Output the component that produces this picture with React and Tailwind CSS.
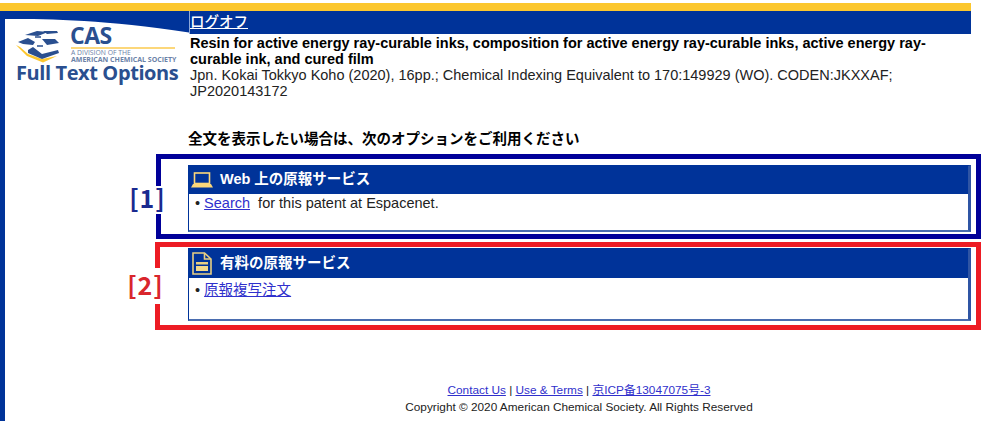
const BLUE = 'bg-[#003399]';

const Logo = () => (
  <>
    <svg className="absolute left-[10px] top-[18px]" width="46" height="34" viewBox="0 0 46 34">
      <path d="M1 16 L5 18 L13 25 L27 30 L42 27 L28 33.5 L12 27 Z" fill="#fcc72e" />
      <path d="M13 21 L18 18 L27 25 L43 21 L44 24 L27 30 L13 24 Z" fill="#2a4f8f" />
      <path d="M10 6 L22 2 L33 3 L23 7 Z" fill="#2a4f8f" />
      <path d="M28 2 L42 2 L43 4 L32 5 Z" fill="#2a4f8f" />
      <path d="M3 13 L13 9 L20 13 L18 16 L8 15 Z" fill="#2a4f8f" />
      <path d="M27 10 L40 10 L44 14 L32 16 Z" fill="#2a4f8f" />
      <path d="M20 8 L26 8 M22 17 L28 17" stroke="#2a4f8f" strokeWidth="1.5" />
    </svg>
    <div className="absolute left-[65px] top-[13px] text-[23px] leading-[23px] font-bold text-[#2a4f8f] font-['Open_Sans',sans-serif] tracking-[-0.5px]">CAS</div>
    <div className="absolute left-[66px] top-[36px] w-[104px] border-t-2 border-[#fcd77a]" />
    <div className="absolute left-[66px] top-[39px] text-[6.8px] leading-[6px] text-[#6b82a8] font-['Open_Sans',sans-serif] whitespace-nowrap">A DIVISION OF THE</div>
    <div className="absolute left-[66px] top-[46px] text-[7px] leading-[6px] font-bold text-[#6b82a8] font-['Open_Sans',sans-serif] whitespace-nowrap">AMERICAN CHEMICAL SOCIETY</div>
    <div className="absolute left-[11px] top-[53px] text-[20px] leading-[18px] font-bold text-[#2a4f8f] font-['Open_Sans',sans-serif] whitespace-nowrap tracking-[-0.4px]">Full Text Options</div>
  </>
);

const LaptopIcon = () => (
  <svg width="22" height="16" viewBox="0 0 22 16" fill="none">
    <rect x="3.5" y="1" width="15" height="10.5" stroke="#fcd77a" strokeWidth="1.6" />
    <path d="M2 12 H20 L22 15.5 H0 Z" fill="#fcd77a" />
  </svg>
);

const DocIcon = () => (
  <svg width="20" height="23" viewBox="0 0 20 23" fill="none">
    <path d="M1 1 H12.5 L19 7 V22 H1 Z" stroke="#e8cf82" strokeWidth="1.6" fill="#003399" />
    <path d="M12.5 1 V7 H19" stroke="#e8cf82" strokeWidth="1.6" />
    <rect x="4" y="10" width="12" height="2.5" fill="#e8cf82" />
    <rect x="4" y="14" width="12" height="5" fill="#f3d98a" />
  </svg>
);

const Card = ({ icon, title, headerHeight, children }) => (
  <div className="w-[783px] border border-[#003399] border-r-[3px] border-b-[2px] border-b-[#4a6db0] border-r-[#2f55a4]">
    <div className={`flex items-center gap-[7px] ${BLUE} ${headerHeight} text-white text-[14.5px] font-bold`}>
      <span className="ml-[2px] w-[22px] flex justify-center">{icon}</span>
      <span>{title}</span>
    </div>
    {children}
  </div>
);

const Frame = ({ className, labelClassName, label, children }) => (
  <div className={`relative border-[5px] ${className}`}>
    <div className={`absolute flex items-center justify-center bg-white w-[35px] text-[25px] leading-[25px] font-bold font-['Noto_Sans_CJK_JP',sans-serif] tracking-[1px] ${labelClassName}`}>{label}</div>
    {children}
  </div>
);

export default function App() {
  return (
    <div className="w-[992px] h-[421px] overflow-hidden bg-white pt-[3px] font-['Liberation_Sans','Noto_Sans_CJK_JP',sans-serif] text-[14.5px] text-[#222]">
      <div className="w-[971px] h-[8px] bg-[#fcc72e]" />
      <div className="flex h-[410px]">
        <div className={`w-[5px] ${BLUE}`} />
        <div className="w-[966px]">
          <div className="flex">
            <div className="relative w-[184px] h-[100px]">
              <svg className="absolute left-0 top-0" width="184" height="23" viewBox="0 0 184 23">
                <path d="M0 0 H184 V21.5 C100 9 50 8 0 8 Z" fill="#003399" />
              </svg>
              <Logo />
            </div>
            <div className="w-[782px]">
              <div className={`h-[23px] ${BLUE} border-l border-[#8fa8d8] text-[14.5px] leading-[22px] font-medium text-white`}>
                <a className="underline">ログオフ</a>
              </div>
              <div className="pt-[1px] pl-[1px] w-[760px] leading-[16px]">
                <div className="font-bold text-black">Resin for active energy ray-curable inks, composition for active energy ray-curable inks, active energy ray-curable ink, and cured film</div>
                <div>Jpn. Kokai Tokkyo Koho (2020), 16pp.; Chemical Indexing Equivalent to 170:149929 (WO). CODEN:JKXXAF; JP2020143172</div>
              </div>
              <div className="mt-[30px] ml-[-1px] leading-[20px] font-bold text-black">全文を表示したい場合は、次のオプションをご利用ください</div>
            </div>
          </div>
          <div className="mt-[5px] flex flex-col gap-[3px]">
            <Frame
              className="ml-[151px] w-[825px] border-[#000099] pl-[27px] pt-[6px] pb-[2px]"
              labelClassName="left-[-31px] top-[27px] h-[28px] pb-[6px] text-[#1a2a8f]"
              label="[1]"
            >
              <Card icon={<LaptopIcon />} title="Web 上の原報サービス" headerHeight="h-[28px]">
                <div className="h-[36px] pl-[6px] leading-[18px]">
                  • <a className="underline text-[#3030cc]">Search</a>&nbsp; for this patent at Espacenet.
                </div>
              </Card>
            </Frame>
            <Frame
              className="ml-[150px] w-[826px] border-[#ed1c24] pl-[28px] pt-[1px] pb-[4px]"
              labelClassName="left-[-32px] top-[21px] h-[36px] pb-[3px] text-[#d9262c]"
              label="[2]"
            >
              <Card icon={<DocIcon />} title="有料の原報サービス" headerHeight="h-[29px]">
                <div className="h-[41px] pl-[6px] pt-[3px] leading-[18px]">
                  • <a className="underline text-[#3030cc]">原報複写注文</a>
                </div>
              </Card>
            </Frame>
          </div>
          <div className="mt-[52px] ml-[183px] w-[782px] text-center text-[11.8px] leading-[17px]">
            <div>
              <a className="underline text-[#3030cc]">Contact Us</a> | <a className="underline text-[#3030cc]">Use &amp; Terms</a> | <a className="underline text-[#3030cc]">京ICP备13047075号-3</a>
            </div>
            <div>Copyright © 2020 American Chemical Society. All Rights Reserved</div>
          </div>
        </div>
      </div>
    </div>
  );
}
